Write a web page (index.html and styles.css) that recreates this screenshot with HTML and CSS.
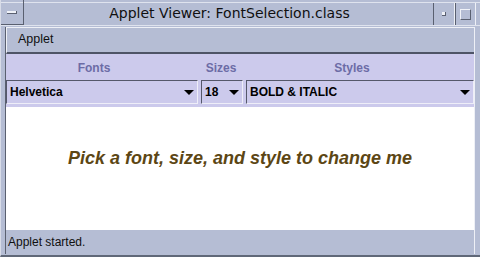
FILE: index.html
```html
<!DOCTYPE html>
<html>
<head>
<meta charset="utf-8">
<link rel="stylesheet" href="styles.css">
</head>
<body>
<div class="window">
  <div class="titlebar">
    <div class="tbtn menu-btn"><span class="dash"></span></div>
    <div class="title">Applet Viewer: FontSelection.class</div>
    <div class="tbtn min-btn"><span class="dot"></span></div>
    <div class="tbtn max-btn"><span class="sq"></span></div>
  </div>
  <div class="frame">
    <div class="menubar"><span class="menu-item">Applet</span></div>
    <div class="panel">
      <div class="labels">
        <div class="lbl lbl-fonts">Fonts</div>
        <div class="lbl lbl-sizes">Sizes</div>
        <div class="lbl lbl-styles">Styles</div>
      </div>
      <div class="combos">
        <div class="combo c-font"><span>Helvetica</span><span class="arrow"></span></div>
        <div class="combo c-size"><span>18</span><span class="arrow"></span></div>
        <div class="combo c-style"><span>BOLD &amp; ITALIC</span><span class="arrow"></span></div>
      </div>
    </div>
    <div class="canvas"><p class="sample">Pick a font, size, and style to change me</p></div>
    <div class="status">Applet started.</div>
  </div>
</div>
</body>
</html>
```

FILE: styles.css
```css
html, body {
  margin: 0;
  padding: 0;
  width: 480px;
  height: 257px;
  overflow: hidden;
}
.window {
  width: 480px;
  height: 257px;
  box-sizing: border-box;
  background: #b5bdd4;
  display: flex;
  flex-direction: column;
  font-family: "DejaVu Sans", sans-serif;
  border-left: 1px solid #d8dce8;
  border-bottom: 2px solid #606878;
}
.titlebar {
  height: 24px;
  display: flex;
  align-items: stretch;
  border-top: 1px solid #dfe3ee;
  border-bottom: 1px solid #dfe3ee;
  box-sizing: border-box;
  margin-top: 2px;
}
.tbtn {
  width: 20px;
  display: flex;
  align-items: center;
  justify-content: center;
}
.menu-btn {
  width: 22px;
  border-right: 1px solid #5a6070;
  border-bottom: 1px solid #5a6070;
  margin-top: -3px;
}
.dash {
  width: 9px;
  height: 2px;
  background: #f0f2f8;
  border-bottom: 1px solid #5a6070;
  border-right: 1px solid #5a6070;
}
.title {
  flex: 1;
  text-align: center;
  font-size: 14px;
  line-height: 21px;
  color: #101010;
  padding-left: 2px;
}
.min-btn {
  border-left: 1px solid #5a6070;
  border-right: 1px solid #eef0f6;
}
.dot {
  width: 3px;
  height: 3px;
  background: #f0f2f8;
  border-right: 1px solid #5a6070;
  border-bottom: 1px solid #5a6070;
}
.max-btn {
  border-left: 1px solid #5a6070;
  width: 19px;
  margin-right: 4px;
  border-right: 1px solid #eef0f6;
}
.sq {
  width: 9px;
  height: 9px;
  border: 1px solid #f0f2f8;
  border-right-color: #5a6070;
  border-bottom-color: #5a6070;
}
.frame {
  flex: 1;
  display: flex;
  flex-direction: column;
  margin: 1px 5px 1px 4px;
  border-left: 1px solid #5a6070;
  border-right: 1px solid #eef0f6;
}
.menubar {
  height: 27px;
  box-sizing: border-box;
  border-top: 1px solid #eef0f6;
  border-left: 1px solid #eef0f6;
  border-bottom: 2px solid #4e5466;
  display: flex;
  align-items: center;
}
.menu-item {
  font-family: "Liberation Sans", Arial, sans-serif;
  font-size: 12.5px;
  color: #101010;
  padding-left: 11px;
  padding-bottom: 2px;
}
.panel {
  background: #cccaec;
  display: flex;
  flex-direction: column;
  padding: 1px 0 3px 0;
}
.labels {
  height: 25px;
  display: flex;
  align-items: center;
  font-family: "Liberation Sans", Arial, sans-serif;
  font-weight: bold;
  font-size: 12px;
  color: #6c6ca6;
}
.lbl { text-align: center; }
.lbl-fonts { width: 176px; }
.lbl-sizes { width: 78px; }
.lbl-styles { width: 184px; }
.combos {
  display: flex;
  gap: 3px;
  height: 24px;
}
.combo {
  box-sizing: border-box;
  height: 24px;
  border: 1px solid #eeeef8;
  border-top-color: #55586a;
  border-left-color: #55586a;
  display: flex;
  align-items: center;
  justify-content: space-between;
  padding: 0 3px 0 3px;
  font-family: "Liberation Sans", Arial, sans-serif;
  font-weight: bold;
  font-size: 12px;
  color: #000;
  background: #cccaec;
}
.c-font { width: 192px; }
.c-size { width: 42px; }
.c-style { flex: 1; }
.arrow {
  width: 0;
  height: 0;
  border-left: 5px solid transparent;
  border-right: 5px solid transparent;
  border-top: 5px solid #000;
}
.canvas {
  flex: 1;
  background: #ffffff;
  display: flex;
  align-items: center;
  justify-content: center;
  padding-bottom: 20px;
}
.sample {
  margin: 0;
  font-family: "Liberation Sans", Arial, sans-serif;
  font-weight: bold;
  font-style: italic;
  font-size: 18px;
  color: #5c4614;
}
.status {
  height: 24px;
  box-sizing: border-box;
  padding-left: 2px;
  display: flex;
  align-items: center;
  font-family: "Liberation Sans", Arial, sans-serif;
  font-size: 12px;
  color: #101010;
}
```
